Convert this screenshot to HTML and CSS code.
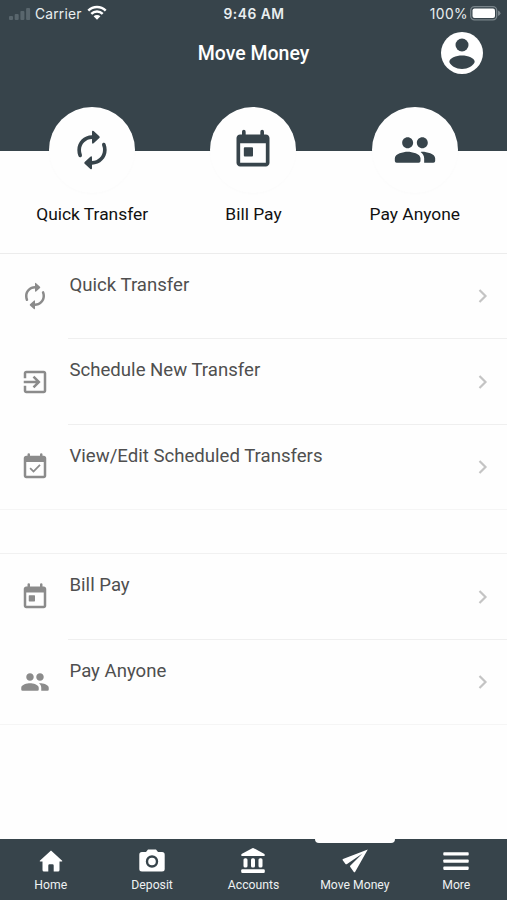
FILE: index.html
```html
<!DOCTYPE html>
<html lang="en">
<head>
<meta charset="utf-8">
<title>Move Money</title>
<link rel="stylesheet" href="styles.css">
</head>
<body>
<svg class="symbols" aria-hidden="true">
  <symbol id="transfer" viewBox="0 0 24 24"><path d="M12 6v1.800q0 1.200.9.500L16 5.500q.5-.5 0-1L12.900 1.700Q12 1 12 2.200V4c-4.420 0-8 3.580-8 8 0 1.200.2 2.300.6 3.300q.4.900 1.300.6.900-.4.600-1.300A6.500 6.500 0 0 1 6 12c0-3.310 2.690-6 6-6zm6.100 2.100q-.9.400-.6 1.300.5 1.200.5 2.600c0 3.310-2.690 6-6 6v-1.800q0-1.200-.9-.5L8 18.500q-.5.500 0 1l3.100 2.800q.9.700.9-.5V20c4.420 0 8-3.580 8-8 0-1.200-.2-2.300-.6-3.300q-.4-.9-1.300-.6z"/></symbol>
  <symbol id="calendar" viewBox="0 0 24 24"><path d="M19 3.500h-1V2a1 1 0 0 0-2 0v1.500H8V2a1 1 0 0 0-2 0v1.500H5c-1.100 0-2 .9-2 2V19c0 1.100.9 2 2 2h14c1.100 0 2-.9 2-2V5.500c0-1.100-.9-2-2-2zM19 19H5V8.300h14V19zM7.500 10.500h4q.5 0 .5.500v4q0 .5-.5.500h-4q-.5 0-.5-.5v-4q0-.5.500-.5z"/></symbol>
  <symbol id="people" viewBox="0 0 24 24"><path d="M16 11c1.66 0 2.99-1.34 2.99-3S17.66 5 16 5s-3 1.34-3 3 1.34 3 3 3zm-8 0c1.66 0 2.99-1.34 2.99-3S9.66 5 8 5 5 6.34 5 8s1.34 3 3 3zm0 2c-2.33 0-7 1.17-7 3.5V18q0 1 1 1h12q1 0 1-1v-1.500C15 14.170 10.330 13 8 13zm8 0c-.29 0-.62.02-.97.05 1.160.84 1.970 1.970 1.970 3.450V19h5q1 0 1-1v-1.500c0-2.330-4.670-3.500-7-3.500z"/></symbol>
  <symbol id="schedule" viewBox="0 0 24 24"><path d="M10.090 15.590 11.500 17l5-5-5-5-1.410 1.410L12.670 11H3v2h9.670zM19 3H5c-1.110 0-2 .9-2 2v4h2V5h14v14H5v-4H3v4c0 1.100.89 2 2 2h14c1.100 0 2-.9 2-2V5c0-1.100-.9-2-2-2z"/></symbol>
  <symbol id="checked" viewBox="0 0 24 24"><path d="M19 3h-1V2a1 1 0 0 0-2 0v1H8V2a1 1 0 0 0-2 0v1H5c-1.100 0-2 .9-2 2v14c0 1.100.9 2 2 2h14c1.100 0 2-.9 2-2V5c0-1.100-.9-2-2-2zm0 16H5V8h14v11zM16.500 10.800l-1-1-4.700 4.700-2.200-2.200-1 1 3.200 3.200z"/></symbol>
  <symbol id="chevron" viewBox="0 0 10 16"><path d="M1.500 2 7.500 8l-6 6" fill="none" stroke="currentColor" stroke-width="2.200"/></symbol>
</svg>
<div class="app">
  <header class="header">
    <div class="status">
      <div class="status-left">
        <svg class="signal" viewBox="0 0 22 14"><rect x="0" y="9" width="4" height="4" rx="1"/><rect x="5.700" y="7" width="4" height="6" rx="1"/><rect x="11.400" y="4" width="4" height="9" rx="1"/><rect x="17.100" y="1" width="4" height="12" rx="1"/></svg>
        <span class="carrier">Carrier</span>
        <svg class="wifi" viewBox="0 0 20 15"><path d="M1.300 5.600a12.400 12.400 0 0 1 17.400 0M4.300 8.900a8.200 8.200 0 0 1 11.400 0" fill="none" stroke="currentColor" stroke-width="2.500"/><path d="M6.600 11.300a4.900 4.900 0 0 1 6.800 0L10 14.700z"/></svg>
      </div>
      <span class="time">9:46 AM</span>
      <div class="status-right">
        <span class="percent">100%</span>
        <svg class="battery" viewBox="0 0 31 15"><rect x=".7" y=".7" width="26" height="13.200" rx="3.800" fill="none" stroke="#79848a" stroke-width="1.300"/><rect x="2.500" y="2.500" width="22.500" height="9.600" rx="2"/><path d="M28 4.600q2.500 1 2.500 2.700T28 10z" fill="#79848a"/></svg>
      </div>
    </div>
    <div class="titlebar">
      <h1 class="title">Move Money</h1>
      <svg class="avatar" viewBox="0 0 42 42"><circle cx="21" cy="21" r="21" fill="#fff"/><circle cx="21" cy="13" r="6.500" fill="#37444b"/><path d="M8.300 30C8.300 26 15 23.500 21 23.500S33.700 26 33.700 30C32 34 27 37 21 37S10 34 8.300 30z" fill="#37444b"/></svg>
    </div>
  </header>
  <section class="shortcuts">
    <div class="shortcut"><div class="disc"><svg><use href="#transfer"/></svg></div><span>Quick Transfer</span></div>
    <div class="shortcut"><div class="disc"><svg><use href="#calendar"/></svg></div><span>Bill Pay</span></div>
    <div class="shortcut"><div class="disc"><svg><use href="#people"/></svg></div><span>Pay Anyone</span></div>
  </section>
  <main class="lists">
    <div class="list">
      <div class="row"><svg class="icon"><use href="#transfer"/></svg><div class="cell"><span class="label">Quick Transfer</span><svg class="chevron"><use href="#chevron"/></svg></div></div>
      <div class="row"><svg class="icon"><use href="#schedule"/></svg><div class="cell"><span class="label">Schedule New Transfer</span><svg class="chevron"><use href="#chevron"/></svg></div></div>
      <div class="row"><svg class="icon"><use href="#checked"/></svg><div class="cell"><span class="label">View/Edit Scheduled Transfers</span><svg class="chevron"><use href="#chevron"/></svg></div></div>
    </div>
    <div class="list">
      <div class="row"><svg class="icon"><use href="#calendar"/></svg><div class="cell"><span class="label">Bill Pay</span><svg class="chevron"><use href="#chevron"/></svg></div></div>
      <div class="row"><svg class="icon"><use href="#people"/></svg><div class="cell"><span class="label">Pay Anyone</span><svg class="chevron"><use href="#chevron"/></svg></div></div>
    </div>
  </main>
  <nav class="tabs">
    <div class="tab"><svg viewBox="0 0 28 28"><path d="M14 3.500 25.200 13.700q.5.800-.5.800H22.500V23q0 1.500-1.500 1.500h-4.300V18.500q0-1.200-1.200-1.200h-3q-1.200 0-1.200 1.200v6H7Q5.500 24.500 5.500 23v-8.500H3.300q-1 0-.5-.8z"/></svg><span>Home</span></div>
    <div class="tab"><svg viewBox="0 0 28 28"><path fill-rule="evenodd" d="M10 2.500h8l2 2.500h4q2.700 0 2.700 2.700V22q0 2.500-2.700 2.500H4Q1.300 24.500 1.300 22V7.700Q1.300 5 4 5h4zM14 8.300a6.200 6.200 0 1 0 0 12.400 6.200 6.200 0 0 0 0-12.400zm0 2.400a3.800 3.800 0 1 1 0 7.600 3.800 3.800 0 0 1 0-7.600z"/></svg><span>Deposit</span></div>
    <div class="tab"><svg viewBox="0 0 28 28"><path d="M13.300 1.200q.7-.4 1.400 0L25 6.800q.8.500.8 1.400 0 .8-.8.800H3q-.8 0-.8-.8 0-.9.800-1.400z"/><rect x="4.500" y="11.200" width="4" height="9.300" rx="1.600"/><rect x="12" y="11.200" width="4" height="9.300" rx="1.600"/><rect x="19.500" y="11.200" width="4" height="9.300" rx="1.600"/><rect x="2.200" y="22.300" width="23.600" height="3.700" rx="1.200"/></svg><span>Accounts</span></div>
    <div class="tab tab-active"><svg viewBox="0 0 28 28"><path d="M26.800 2.500 2 12q-.8.400-.3 1.200L4.500 17q.5.600 1.200.2L21.500 6.500 9.200 18.800q-.5.600.1 1.200l3.500 4.900q.8.900 1.400-.1z"/></svg><span>Move Money</span></div>
    <div class="tab"><svg viewBox="0 0 28 28"><rect x="1.300" y="5.200" width="25.400" height="3.300" rx=".8"/><rect x="1.300" y="12.400" width="25.400" height="3.300" rx=".8"/><rect x="1.300" y="19.600" width="25.400" height="3.300" rx=".8"/></svg><span>More</span></div>
  </nav>
</div>
</body>
</html>
```
FILE: styles.css
```css
* { box-sizing: border-box; }
body { margin: 0; background: #fefefe; font-family: Roboto, "Liberation Sans", sans-serif; }
svg { display: block; fill: currentColor; flex: none; }
.symbols { display: none; }
.app { width: 507px; height: 900px; display: flex; flex-direction: column; overflow: hidden; }

.header { height: 151px; flex: none; background: #37444b; color: #fff; }
.status { height: 28px; display: grid; grid-template-columns: 1fr auto 1fr; align-items: center; padding: 0 6px 0 9px; font-family: Inter, sans-serif; font-size: 13.8px; color: #e9eef0; }
.status-left, .status-right { display: flex; align-items: center; }
.status-right { justify-content: flex-end; gap: 2px; }
.signal { width: 22px; height: 14px; color: #59666d; }
.carrier { margin-left: 4px; letter-spacing: .2px; }
.wifi { width: 20px; height: 15px; margin: -3px 0 0 5px; color: #fff; }
.time { margin-left: -2px; font-weight: 600; letter-spacing: .5px; }
.battery { width: 31px; height: 15px; margin-top: -1px; color: #fff; }
.percent { letter-spacing: .4px; }
.titlebar { height: 49px; display: grid; grid-template-columns: 1fr auto 1fr; align-items: center; padding-right: 24px; padding-left: 24px; }
.title { grid-column: 2; margin: 2px 0 0; font-size: 19.5px; font-weight: 500; }
.avatar { width: 42px; height: 42px; justify-self: end; }

.shortcuts { height: 102.5px; flex: none; display: grid; grid-template-columns: repeat(3, 1fr); padding: 0 11.5px; border-bottom: 1px solid #ececec; }
.shortcut { display: flex; flex-direction: column; align-items: center; margin-top: -44px; font-size: 17.4px; line-height: 22px; color: #111; }
.disc { width: 86px; height: 86px; display: flex; align-items: center; justify-content: center; margin-bottom: 10px; border-radius: 50%; background: #fefefe; box-shadow: 0 1px 3px rgba(0, 0, 0, .015); color: #37444b; }
.disc svg { width: 44px; height: 44px; }

.lists { flex: 1; display: flex; flex-direction: column; gap: 43px; }
.list { border-bottom: 1px solid #f5f5f5; }
.list + .list { border-top: 1px solid #f1f1f1; }
.row { height: 85.5px; display: flex; align-items: center; padding-left: 20px; color: #8b8b8b; }
.row:last-child { height: 84.5px; }
.icon { width: 30px; height: 30px; }
.cell { flex: 1; height: 100%; display: flex; align-items: center; justify-content: space-between; margin-left: 18px; padding: 0 19px 0 1.5px; border-bottom: 1px solid #efefef; }
.row:last-child .cell { border-bottom: 0; }
.label { align-self: flex-start; margin-top: 19.4px; font-size: 18.6px; line-height: 24px; color: #4f4f4f; }
.chevron { width: 10px; height: 16px; margin-top: 1px; color: #c4c4c4; }

.tabs { height: 61.5px; flex: none; display: grid; grid-template-columns: repeat(5, 1fr); background: #37444b; color: #fff; }
.tab { position: relative; display: flex; flex-direction: column; align-items: center; padding-top: 8.5px; font-size: 12.2px; line-height: 16px; }
.tab svg { width: 28px; height: 28px; margin-bottom: 1.5px; }
.tab span { color: #eef1f2; }
.tab-active::before { content: ""; position: absolute; top: 0; left: 11px; width: 80px; height: 4.5px; border-radius: 0 0 4px 4px; background: #fefefe; }
```
